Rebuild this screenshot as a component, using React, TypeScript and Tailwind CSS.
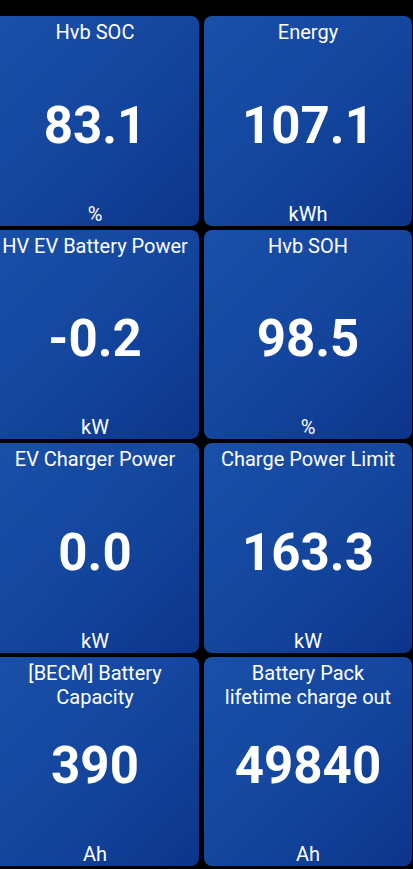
const TILES = [
  { title: ['Hvb SOC'], value: '83.1', unit: '%' },
  { title: ['Energy'], value: '107.1', unit: 'kWh' },
  { title: ['HV EV Battery Power'], value: '-0.2', unit: 'kW' },
  { title: ['Hvb SOH'], value: '98.5', unit: '%' },
  { title: ['EV Charger Power'], value: '0.0', unit: 'kW' },
  { title: ['Charge Power Limit'], value: '163.3', unit: 'kW' },
  { title: ['[BECM] Battery', 'Capacity'], value: '390', unit: 'Ah' },
  { title: ['Battery Pack', 'lifetime charge out'], value: '49840', unit: 'Ah' },
];

function Tile({ title, value, unit }: { title: string[]; value: string; unit: string }) {
  return (
    <div className="grid h-[209.5px] grid-rows-[1fr_auto_1fr] rounded-[8px] bg-linear-to-br from-[#1a50a8] via-[#14469e] to-[#0c358a] px-1 pt-[4px] text-center text-white">
      <div className="text-[20px] leading-[24px]">
        {title.map((line) => (
          <div key={line} className="whitespace-nowrap">{line}</div>
        ))}
      </div>
      <div className="mt-[5px] text-[51px] font-bold leading-none">{value}</div>
      <div className="flex items-end justify-center text-[20px] leading-[23px]">{unit}</div>
    </div>
  );
}

export default function App() {
  return (
    <div className="h-[869px] w-[413px] overflow-hidden bg-black pt-[16px] font-['Roboto',sans-serif]">
      <div className="ml-[-9px] grid w-[421px] grid-cols-2 gap-x-[5px] gap-y-[4px]">
        {TILES.map((t) => (
          <Tile key={t.title.join(' ')} {...t} />
        ))}
      </div>
    </div>
  );
}
